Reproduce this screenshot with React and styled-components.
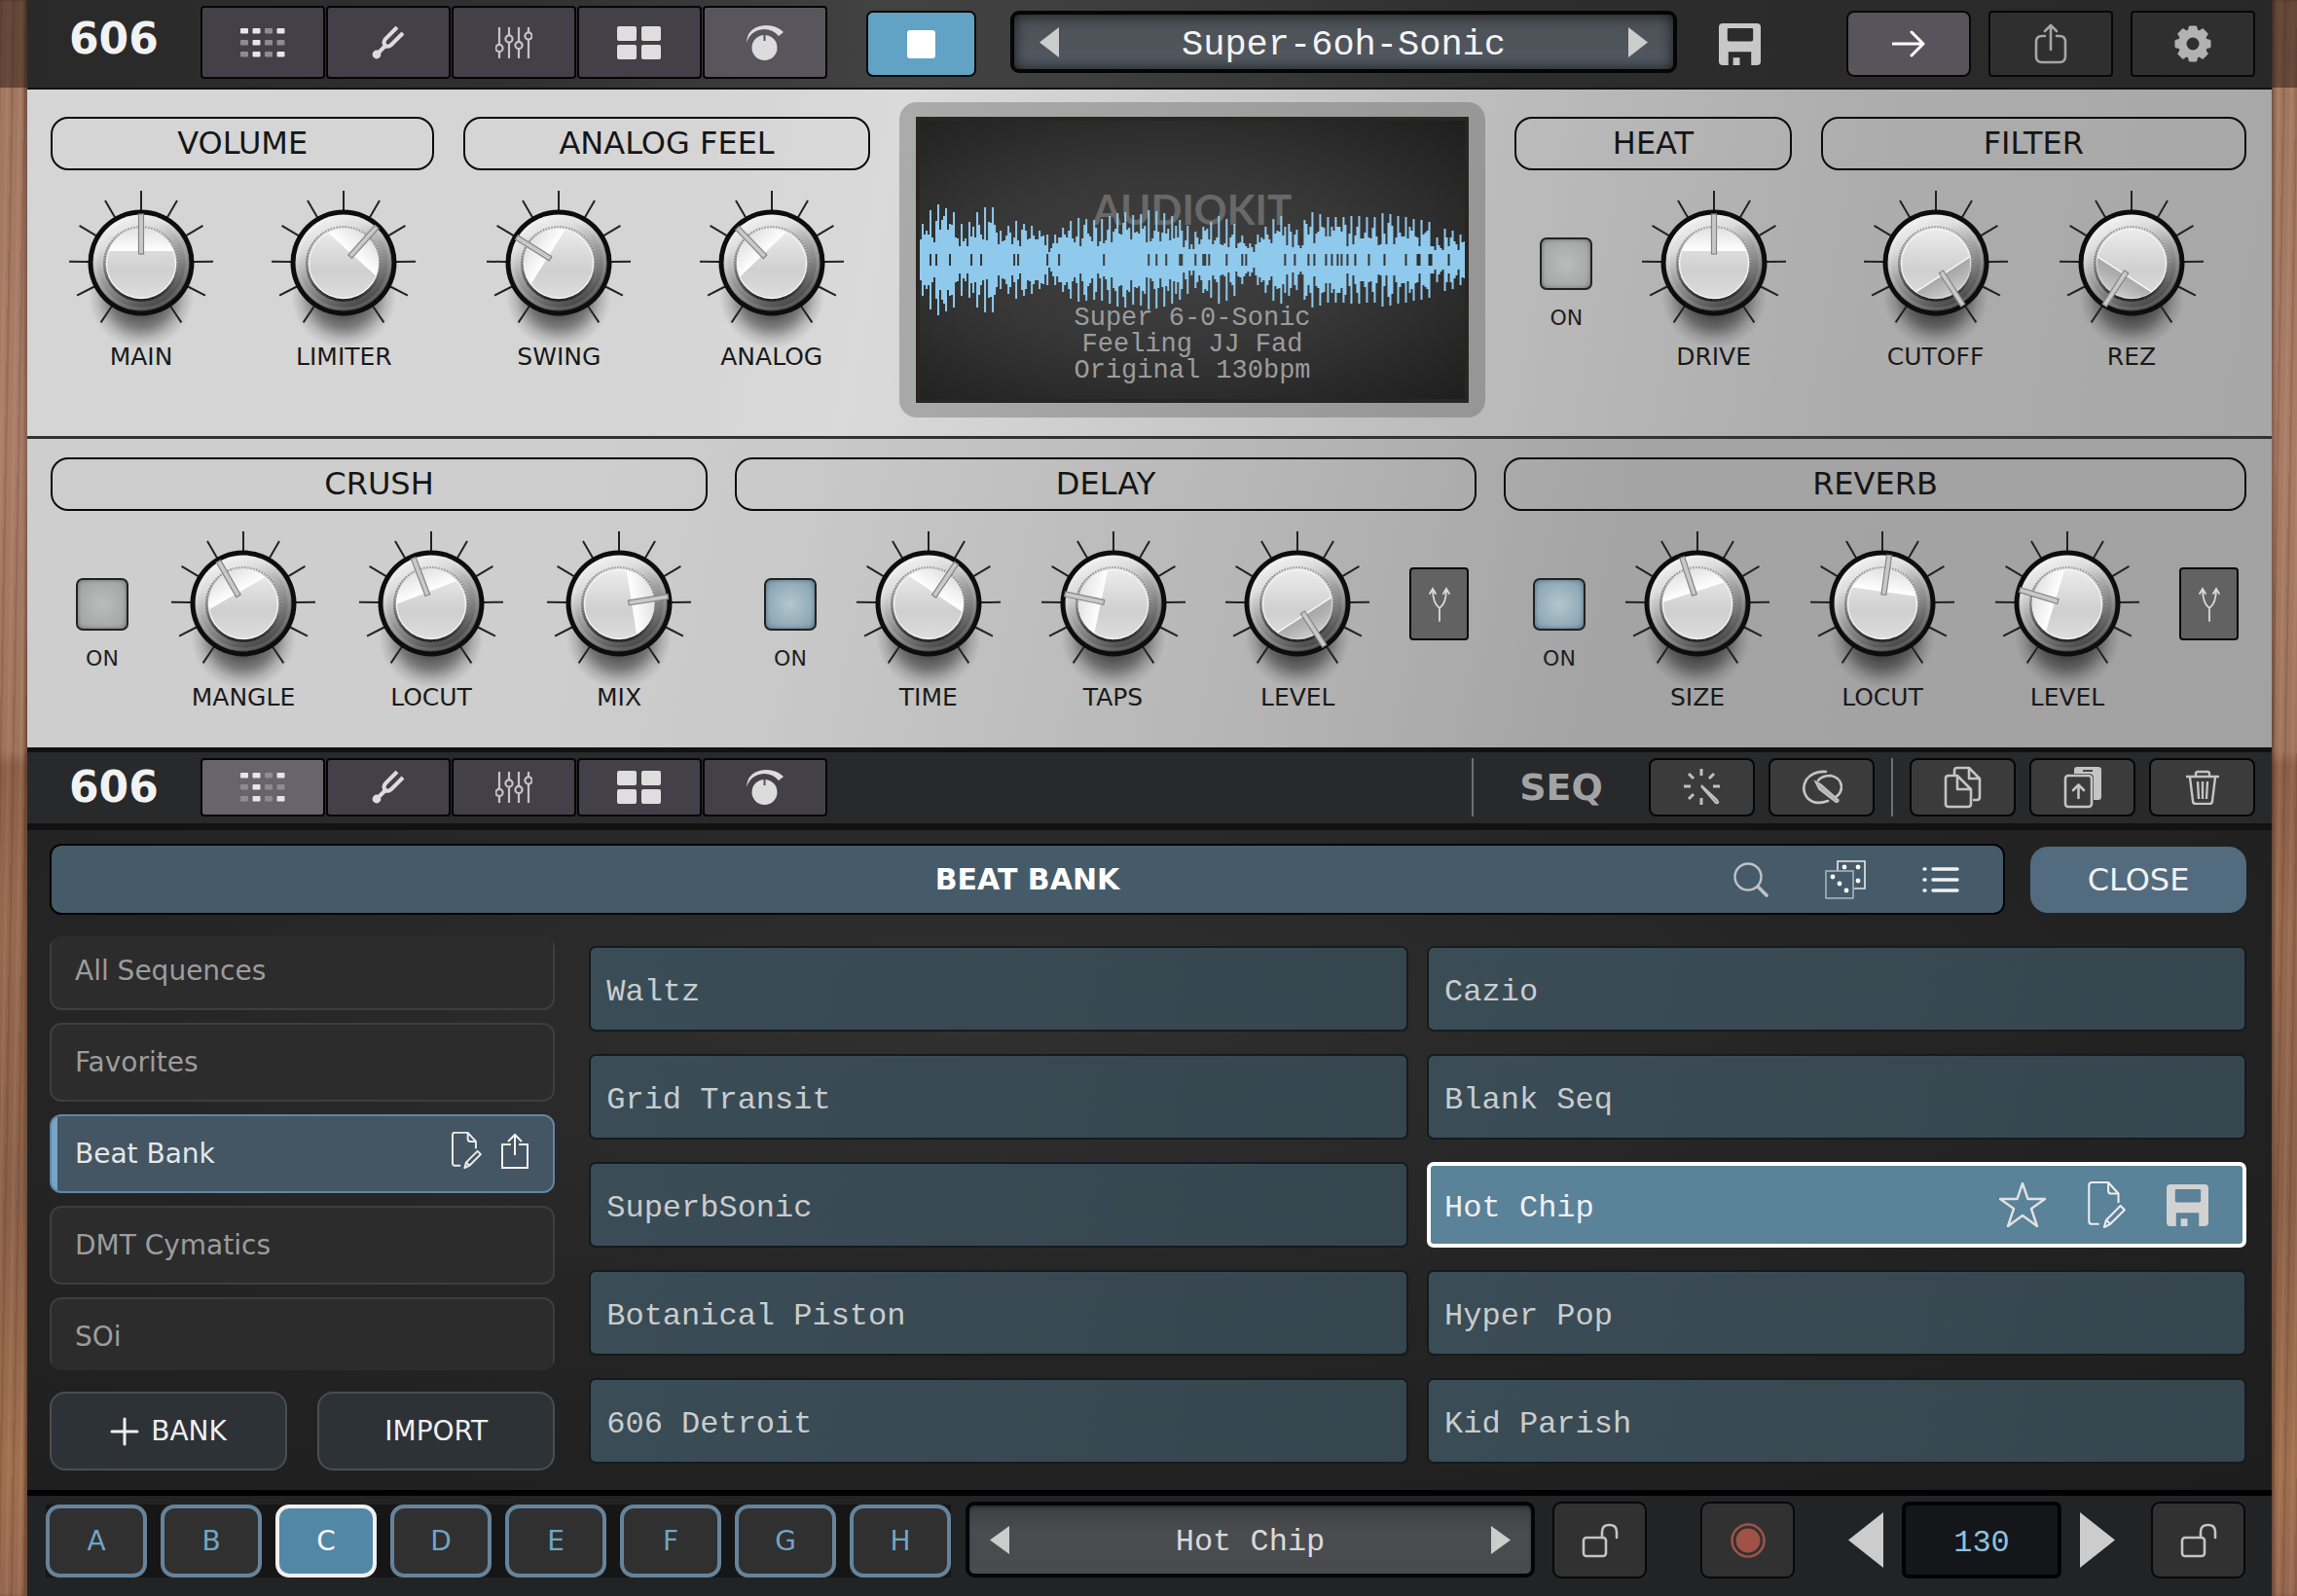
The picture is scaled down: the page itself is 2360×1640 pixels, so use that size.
import React from "react";
import styled, { createGlobalStyle, css } from "styled-components";

const GlobalStyle = createGlobalStyle`
    * {
        box-sizing: border-box;
    }

    body {
        margin: 0;
        background: #1b1b1b;
        font-family: "DejaVu Sans", sans-serif;
    }

    button {
        font-family: inherit;
        padding: 0;
        margin: 0;
        cursor: pointer;
    }

    svg {
        display: block;
    }
`

const lcd = css`
    font-family: "Liberation Mono", monospace;
`

const Device = styled.div`
    display: grid;
    grid-template-columns: 28px minmax(0, 1fr) 26px;
    min-height: 100vh;
`

const Wood = styled.div`
    background:
        linear-gradient(to bottom, rgba(40, 24, 16, 0.5) 90px, transparent 90px),
        repeating-linear-gradient(91deg, rgba(60, 25, 10, 0.14) 0 2px, transparent 3px 7px, rgba(255, 220, 190, 0.07) 8px 10px, transparent 11px 13px),
        linear-gradient(to bottom, #a0765e, #a97c66 28%, #a0745c 47%, #8c5f47 48%, #96694f 58%, #8a6049 75%, #a0704f 92%, #966750);
    box-shadow: inset ${({ $side }) => ($side === "left" ? "-3px" : "3px")} 0 3px rgba(0, 0, 0, 0.25);
`

const Main = styled.main`
    display: flex;
    flex-direction: column;
    min-width: 0;
`

/* ---------- toolbars ---------- */

const TopBar = styled.header`
    display: flex;
    align-items: flex-start;
    height: 92px;
    padding: 0 17px 0 43px;
    border-bottom: 2px solid #111;
    background: linear-gradient(to right, #292929, #303030 22%, #424242 38%, #3e3e3e 48%, #2d2d2d 66%, #282828);
`

const SeqBar = styled.header`
    display: flex;
    align-items: center;
    height: 85px;
    padding: 0 17px 2px 43px;
    border-top: 5px solid #111;
    border-bottom: 7px solid #121212;
    background: #27292b;
`

const Logo = styled.div`
    width: 135px;
    color: #f2f2f2;
    font-size: 44px;
    line-height: 80px;
    font-weight: bold;
`

const SeqTitle = styled.h2`
    margin: 0 20px;
    width: 140px;
    text-align: center;
    color: #a3a3a5;
    font-size: 38px;
    font-weight: bold;
    line-height: 60px;
`

const Tabs = styled.nav`
    display: flex;
    gap: 1px;
    padding-top: ${({ $top }) => $top}px;
`

const Tab = styled.button`
    display: flex;
    align-items: center;
    justify-content: center;
    width: 128px;
    height: ${({ $tall }) => ($tall ? 75 : 60)}px;
    border: 2px solid #050505;
    border-radius: 4px;
    background: ${({ $active, $tall }) => ($active ? ($tall ? "#58565c" : "#67656b") : "#434147")};
`

const Spacer = styled.div`
    flex: 1;
`

const StopButton = styled.button`
    display: flex;
    align-items: center;
    justify-content: center;
    width: 113px;
    height: 68px;
    margin: 11px 35px 0 40px;
    border: 2px solid #0a0a0a;
    border-radius: 7px;
    background: #62a2c4;
`

const Display = styled.div`
    display: flex;
    align-items: center;
    justify-content: space-between;
    flex: 1;
    min-width: 0;
    height: 78px;
    padding: 0 21px;
    border: 4px solid #050505;
    border-radius: 9px;
    background: linear-gradient(#3e3f41, #4a4c50 40%, #484a4e);
    box-shadow: inset 0 2px 3px rgba(0, 0, 0, 0.35);
`

const PresetDisplay = styled(Display)`
    height: 64px;
    margin-top: 11px;
    padding: 0 26px;
    background: linear-gradient(#4b5056, #535961);
    box-shadow: inset 0 0 14px rgba(0, 0, 0, 0.75);
`

const DisplayText = styled.span`
    ${lcd}
    padding-top: 5px;
    color: ${({ $dim }) => ($dim ? "#d9d9d9" : "#f4f4f4")};
    font-size: ${({ $dim }) => ($dim ? 32 : 37)}px;
    white-space: nowrap;
`

const PlainButton = styled.button`
    display: flex;
    align-items: center;
    justify-content: center;
    border: 0;
    background: none;
`

const SaveButton = styled(PlainButton)`
    width: 44px;
    height: 46px;
    margin: 22px 88px 0 42px;
`

const ToolGroup = styled.div`
    display: flex;
    gap: ${({ $gap }) => $gap}px;
`

const BarButton = styled.button`
    display: flex;
    align-items: center;
    justify-content: center;
    width: 128px;
    height: 68px;
    margin-top: 11px;
    border: 2px solid #080808;
    border-radius: ${({ $lit }) => ($lit ? 8 : 4)}px;
    background: ${({ $lit }) => ($lit ? "#57555b" : "#2f2f2f")};
`

const SeqButton = styled.button`
    display: flex;
    align-items: center;
    justify-content: center;
    width: 109px;
    height: 60px;
    border: 2px solid #050505;
    border-radius: 8px;
    background: #3b3b3b;
`

const Divider = styled.div`
    width: 2px;
    height: 60px;
    background: #6f7072;
    margin: 0 ${({ $gap }) => $gap}px;
`

/* ---------- synth panels ---------- */

const Panel = styled.section`
    display: grid;
    align-items: start;
`

const UpperPanel = styled(Panel)`
    grid-template-columns: 394fr 417fr 602fr 284fr 437fr;
    column-gap: 30px;
    padding: 13px 26px 19px 24px;
    border-bottom: 3px solid #333;
    background: linear-gradient(100deg, #d5d5d5 30%, #dadada 38%, #bcbcbc 64%, #adadad 80%, #a7a7a7);
`

const LowerPanel = styled(Panel)`
    grid-template-columns: 675fr 762fr 763fr;
    column-gap: 28px;
    padding: 19px 26px 37px 24px;
    background: linear-gradient(102deg, #cecece 24%, #c9c9c9 34%, #b6b6b6 54%, #a4a4a4 70%, #a2a2a2);
`

const GroupBox = styled.div`
    margin-top: ${({ $top }) => $top || 0}px;
    min-width: 0;
`

const GroupTitle = styled.h3`
    margin: 0 0 20px;
    border: 2px solid #0c0c0c;
    border-radius: 18px;
    text-align: center;
    font-size: 32px;
    font-weight: normal;
    line-height: 51px;
    color: #151515;
`

const GroupRow = styled.div`
    display: flex;
    justify-content: space-between;
    padding: 0 ${({ $right }) => $right}px 0 ${({ $left }) => $left}px;
`

const KnobBox = styled.div`
    display: flex;
    flex-direction: column;
    align-items: center;
    width: 150px;
    svg {
        overflow: visible;
    }
`

const KnobLabel = styled.span`
    position: relative;
    margin-top: 8px;
    font-size: 25px;
    line-height: 28px;
    color: #1a1a1a;
`

const SwitchBox = styled.div`
    display: flex;
    flex-direction: column;
    align-items: center;
    width: 54px;
    padding-top: 49px;
`

const SwitchButton = styled.button`
    width: 54px;
    height: 54px;
    border: 2px solid #222;
    border-radius: 7px;
    background: ${({ $on }) => ($on ? "radial-gradient(#b5c6cb, #8faab8 70%, #7795a6)" : "radial-gradient(#b9bdbb, #a4a8a6 75%, #959997)")};
    box-shadow: inset 0 0 4px rgba(0, 0, 0, 0.35);
`

const SwitchLabel = styled.span`
    margin-top: 17px;
    font-size: 22px;
    line-height: 24px;
    color: #1f1f1f;
`

const RouteButton = styled.button`
    display: flex;
    align-items: center;
    justify-content: center;
    width: 61px;
    height: 75px;
    margin-top: 38px;
    border: 2px solid #0a0a0a;
    border-radius: 4px;
    background: #626262;
`

const Bezel = styled.div`
    padding: 15px 17px;
    border-radius: 18px;
    background: rgba(70, 70, 70, 0.32);
`

const Screen = styled.div`
    display: grid;
    height: 294px;
    border: 4px solid #2a2523;
    background: radial-gradient(ellipse at 45% 50%, #414141, #373737 45%, #1e1e1e 100%);
    > * {
        grid-area: 1 / 1;
    }
`

const ScreenText = styled.div`
    display: flex;
    flex-direction: column;
    align-items: center;
    padding-top: 68px;
`

const Brand = styled.div`
    color: #686868;
    font-family: Lato, sans-serif;
    font-size: 42px;
    font-weight: bold;
    line-height: 46px;
`

const Notes = styled.p`
    ${lcd}
    margin: 76px 0 0;
    text-align: center;
    white-space: pre-line;
    color: #9c9c9c;
    font-size: 27px;
    line-height: 27px;
`

const WaveSvg = styled.svg`
    width: 100%;
    height: 286px;
`

/* ---------- browser ---------- */

const Browser = styled.section`
    padding: 14px 26px 20px 23px;
    border-bottom: 6px solid #000;
    background: radial-gradient(ellipse at 42% 30%, #303030, #242424 50%, #1d1d1d);
`

const BrowserHead = styled.div`
    display: flex;
    align-items: center;
    gap: 26px;
`

const HeadBar = styled.div`
    display: grid;
    grid-template-columns: 1fr auto 1fr;
    align-items: center;
    flex: 1;
    height: 73px;
    padding: 0 45px;
    border: 2px solid #030303;
    border-radius: 12px;
    background: #465b69;
`

const HeadTitle = styled.h2`
    grid-column: 2;
    margin: 0;
    color: #fff;
    font-size: 30px;
    line-height: 40px;
`

const HeadTools = styled.div`
    display: flex;
    align-items: center;
    justify-content: flex-end;
    gap: 58px;
`

const CloseButton = styled.button`
    width: 222px;
    height: 68px;
    border: 0;
    border-radius: 18px;
    background: #536b7e;
    color: #f1f1f1;
    font-size: 32px;
`

const BrowserBody = styled.div`
    display: grid;
    grid-template-columns: 519fr 1702fr;
    column-gap: 35px;
    margin-top: 22px;
`

const BankList = styled.div`
    display: flex;
    flex-direction: column;
    justify-content: center;
    gap: 13px;
    height: 446px;
    overflow: hidden;
    border-radius: 12px;
`

const Bank = styled.div`
    display: flex;
    align-items: center;
    flex: none;
    height: 81px;
    border: 2px solid ${({ $active }) => ($active ? "#5f87a4" : "#3e3e3e")};
    border-radius: 12px;
    background: ${({ $active }) => ($active ? "linear-gradient(to right, #76a5c6 6px, #445563 6px)" : "#2c2c2c")};
`

const BankName = styled.button`
    flex: 1;
    height: 77px;
    padding-left: 24px;
    border: 0;
    background: none;
    text-align: left;
    font-size: 28px;
    color: ${({ $active }) => ($active ? "#e6e6e6" : "#9c9c9e")};
`

const BankTools = styled.div`
    display: flex;
    gap: 20px;
    padding: 0 25px 6px 0;
`

const BankActions = styled.div`
    display: grid;
    grid-template-columns: 1fr 1fr;
    gap: 31px;
    margin-top: 22px;
`

const ActionButton = styled.button`
    display: flex;
    align-items: center;
    justify-content: center;
    gap: 12px;
    height: 81px;
    border: 2px solid #4a4e51;
    border-radius: 16px;
    background: #2d3237;
    color: #efefef;
    font-size: 28px;
`

const Sequences = styled.div`
    display: grid;
    grid-template-columns: 1fr 1fr;
    align-content: start;
    gap: 23px 19px;
    padding-top: 10px;
`

const Sequence = styled.div`
    display: flex;
    align-items: center;
    height: 88px;
    border: 2px solid #151a1d;
    border-radius: 7px;
    background: linear-gradient(100deg, #3a4c56, #36464f);
    ${({ $active }) => $active && css`
        border: 4px solid #fff;
        background: #5a8299;
    `}
`

const SequenceName = styled.button`
    ${lcd}
    flex: 1;
    height: 80px;
    padding: 6px 0 0 ${({ $active }) => ($active ? 14 : 16)}px;
    border: 0;
    background: none;
    text-align: left;
    font-size: 32px;
    color: ${({ $active }) => ($active ? "#f0f0f0" : "#c9cccd")};
`

const SequenceTools = styled.div`
    display: flex;
    align-items: center;
    gap: 42px;
    padding-right: 35px;
`

/* ---------- footer ---------- */

const Footer = styled.footer`
    display: flex;
    align-items: flex-start;
    flex: 1;
    min-height: 103px;
    padding: 6px 27px 0 19px;
    background: #212325;
`

const Pads = styled.div`
    display: flex;
    gap: 14px;
    margin: 3px 15px 0 0;
    background: #161616;
`

const Pad = styled.button`
    width: 104px;
    height: 75px;
    border: 4px solid ${({ $active }) => ($active ? "#f0f0f0" : "#66839b")};
    border-radius: 14px;
    background: ${({ $active }) => ($active ? "#5288a5" : "#303030")};
    color: ${({ $active }) => ($active ? "#f4f4f4" : "#6fa5c6")};
    font-size: 28px;
`

const SquareButton = styled.button`
    display: flex;
    align-items: center;
    justify-content: center;
    width: 97px;
    height: 79px;
    margin-left: ${({ $gap }) => $gap}px;
    border: 2px solid #080808;
    border-radius: 9px;
    background: #313131;
`

const Tempo = styled.div`
    display: flex;
    align-items: center;
    gap: 19px;
    margin-left: 55px;
`

const TempoInput = styled.input`
    ${lcd}
    width: 164px;
    height: 79px;
    padding: 5px 0 0;
    border: 4px solid #030303;
    border-radius: 7px;
    background: #15161a;
    color: #8ec2de;
    text-align: center;
    font-size: 32px;
`

/* ---------- icons ---------- */

const GRID = ["1101", "0100", "0101"]

const GridIcon = () => (
    <svg width="46" height="30" viewBox="0 0 46 30">
        {GRID.map((row, y) =>
            row.split("").map((on, x) => (
                <rect key={`${x}${y}`} x={x * 12.5} y={y * 12} width="8" height="5.5" rx="1" fill={on === "1" ? "#e6e6e6" : "#8d8c90"} />
            ))
        )}
    </svg>
)

const ForkIcon = () => (
    <svg width="34" height="34" viewBox="0 0 34 34" fill="none" stroke="#dcdcdc">
        <path d="M26 1 L14 13 Q11 17 14 20 Q17 22 20 19 L32 7" strokeWidth="4" />
        <path d="M14 20 L5 29" strokeWidth="4" strokeLinecap="round" />
        <circle cx="5" cy="29" r="4.4" fill="#dcdcdc" stroke="none" />
    </svg>
)

const FadersIcon = () => (
    <svg width="38" height="34" viewBox="0 0 38 34" fill="none" stroke="#c4c4c6" strokeWidth="2.2">
        <path d="M4 1V19M4 26V33M14 1V9M14 17V33M24 1V16M24 23V33M34 1V6M34 14V33" />
        <circle cx="4" cy="22.5" r="3.6" />
        <circle cx="14" cy="13" r="3.6" />
        <circle cx="24" cy="19.5" r="3.6" />
        <circle cx="34" cy="10" r="3.6" />
    </svg>
)

const PadsIcon = () => (
    <svg width="46" height="34" viewBox="0 0 46 34" fill="#dedede">
        <rect x="0" y="0" width="20" height="15" rx="2" />
        <rect x="25" y="0" width="20" height="15" rx="2" />
        <rect x="0" y="19" width="20" height="15" rx="2" />
        <rect x="25" y="19" width="20" height="15" rx="2" />
    </svg>
)

const DialIcon = () => (
    <svg width="38" height="38" viewBox="0 0 38 38">
        <path d="M0 19 Q1 2 20 1 Q31 1 38 8 L33 12 Q27 5 18 5 Q4 6 0 19Z" fill="#dcdcdc" />
        <circle cx="18.5" cy="24" r="13" fill="#dcdcdc" />
        <path d="M18.500 11V17" stroke="#555" strokeWidth="2" />
    </svg>
)

const TabIcons = [GridIcon, ForkIcon, FadersIcon, PadsIcon, DialIcon]
const tabNames = ["Sequencer", "Tune", "Mixer", "Pads", "Effects"]

const Triangle = ({ w = 20, h = 31, flip }) => (
    <svg width={w} height={h} viewBox="0 0 20 30" preserveAspectRatio="none" fill="#cccccc">
        <path d={flip ? "M0 0L20 15L0 30Z" : "M20 0L0 15L20 30Z"} />
    </svg>
)

const SaveIcon = ({ color = "#c8c8c8" }) => (
    <svg width="43" height="43" viewBox="0 0 44 44" fill={color}>
        <path fillRule="evenodd" d="M4 0H40Q44 0 44 4V40Q44 44 40 44H34V30H10V44H4Q0 44 0 40V4Q0 0 4 0ZM9 6V17Q9 19 11 19H34Q36 19 36 17V6Q36 5 34 5H11Q9 5 9 6Z" />
        <rect x="15" y="36" width="7" height="8" />
    </svg>
)

const ArrowIcon = () => (
    <svg width="34" height="28" viewBox="0 0 34 28" fill="none" stroke="#fff" strokeWidth="3" strokeLinecap="round" strokeLinejoin="round">
        <path d="M1 14H32M20 2L32 14L20 26" />
    </svg>
)

const RoundShareIcon = () => (
    <svg width="34" height="42" viewBox="0 0 34 42" fill="none" stroke="#a6a6a6" strokeWidth="2.6" strokeLinecap="round" strokeLinejoin="round">
        <path d="M11 13H8Q2 13 2 19V34Q2 40 8 40H26Q32 40 32 34V19Q32 13 26 13H23M17 27V2M11 8L17 2L23 8" />
    </svg>
)

const GearIcon = () => (
    <svg width="40" height="40" viewBox="-20 -20 40 40" fill="#b2b2b2">
        {[0, 45, 90, 135, 180, 225, 270, 315].map((a) => (
            <path key={a} d="M-5 -12L-3.6 -18H3.6L5 -12Z" transform={`rotate(${a})`} stroke="#b2b2b2" strokeLinejoin="round" />
        ))}
        <path fillRule="evenodd" d="M0 -15A15 15 0 1 0 0 15A15 15 0 1 0 0 -15ZM0 -6.5A6.5 6.5 0 1 1 0 6.5A6.5 6.5 0 1 1 0 -6.5Z" />
    </svg>
)

const SparkIcon = () => (
    <svg width="40" height="40" viewBox="0 0 40 40" fill="none" stroke="#c0c0c0" strokeWidth="3">
        <path d="M19 1V8M19 31V38M1 19H8M31 19H38M6 6L11 11M32 6L27 11M6 32L11 27" />
        <path d="M19 18L35 33Q38 37 34 36L19 19" strokeWidth="2" fill="#777" />
    </svg>
)

const BrushIcon = () => (
    <svg width="42" height="36" viewBox="0 0 42 36" fill="none" stroke="#c4c4c4" strokeWidth="2.6" strokeLinecap="round">
        <path d="M25 2Q12 1 5 10Q-1 20 6 29Q14 37 27 32" />
        <path d="M17 11Q21 6 30 6Q40 8 41 17Q41 24 35 28" />
        <path d="M14 12L20 15L38 31Q38 34 35 33L18 20Z" fill="#b4b4b4" strokeWidth="1.4" />
    </svg>
)

const CopyIcon = () => (
    <svg width="40" height="44" viewBox="0 0 40 44" fill="none" stroke="#c4c4c4" strokeWidth="2.6" strokeLinejoin="round">
        <path d="M11 9V5Q11 2 14 2H26L37 13V32Q37 35 34 35H30M26 2V13H37" />
        <path d="M5 10H14L28 24V39Q28 42 25 42H5Q2 42 2 39V13Q2 10 5 10ZM14 10V24H28" />
    </svg>
)

const PasteIcon = () => (
    <svg width="40" height="44" viewBox="0 0 40 44">
        <path d="M11 8V4Q11 1 14 1H36Q39 1 39 4V32Q39 35 36 35H31V13Q31 8 26 8Z" fill="#c4c4c4" />
        <path d="M20 5H30" stroke="#444" strokeWidth="2" />
        <g fill="none" stroke="#c4c4c4" strokeWidth="2.6" strokeLinecap="round" strokeLinejoin="round">
            <rect x="2" y="10" width="27" height="32" rx="3" />
            <path d="M15.500 33V20M10 25L15.500 19.500L21 25" />
        </g>
    </svg>
)

const TrashIcon = () => (
    <svg width="34" height="36" viewBox="0 0 34 36" fill="none" stroke="#c4c4c4" strokeWidth="2.4" strokeLinejoin="round">
        <path d="M0 7H34M10 7V4Q10 2 12 2H22Q24 2 24 4V7M4 8L7 32Q7 35 10 35H24Q27 35 27 32L30 8M12 12L13 30M17 12V30M22 12L21 30" />
    </svg>
)

const RouteIcon = () => (
    <svg width="22" height="36" viewBox="0 0 22 36" fill="none" stroke="#dadada" strokeWidth="1.8" strokeLinecap="round">
        <path d="M11 35V22Q4 17 4 2M11 22Q18 17 18 2M1 7L4 2L7 7M15 7L18 2L21 7" />
    </svg>
)

const SearchIcon = () => (
    <svg width="36" height="36" viewBox="0 0 36 36" fill="none" stroke="#c2c2c2" strokeLinecap="round">
        <circle cx="15" cy="15" r="13.5" strokeWidth="2.4" />
        <path d="M25 25L34 34" strokeWidth="3.6" />
    </svg>
)

const DiceIcon = () => (
    <svg width="42" height="40" viewBox="0 0 42 40" fill="none" stroke="#e6eaec" strokeWidth="1.6">
        <path d="M13 11V1H41V29H30" />
        <rect x="1" y="11" width="28" height="28" stroke="#a5b4be" />
        <g fill="#fff" stroke="none">
            <circle cx="20" cy="7" r="2.4" />
            <circle cx="34" cy="7" r="2.4" />
            <circle cx="34" cy="21" r="2.4" />
            <circle cx="8" cy="17" r="2.4" />
            <circle cx="15" cy="24" r="2.4" />
            <circle cx="22" cy="31" r="2.4" />
        </g>
    </svg>
)

const ListIcon = () => (
    <svg width="38" height="28" viewBox="0 0 38 28" stroke="#f2f2f2" strokeWidth="3.4" strokeLinecap="round">
        <path d="M2 3H3M11 3H36M2 14H3M11 14H36M2 25H3M11 25H36" />
    </svg>
)

const NoteIcon = ({ w, h, width }) => (
    <svg width={w} height={h} viewBox="0 0 38 46" fill="none" stroke="#ececec" strokeWidth={width} strokeLinejoin="round">
        <path d="M12 42H5Q2 42 2 39V4Q2 1 5 1H21L31 12V21M21 1V9Q21 12 24 12H31" />
        <path d="M17 45L19 38L33 24L37 28L23 42ZM19 38L23 42" />
    </svg>
)

const ShareIcon = () => (
    <svg width="28" height="37" viewBox="0 0 28 37" fill="none" stroke="#f2f2f2" strokeWidth="2">
        <path d="M10 12H1V36H27V12H18M14 23V2M7 9L14 2L21 9" />
    </svg>
)

const StarIcon = () => (
    <svg width="48" height="46" viewBox="0 0 48 46" fill="none" stroke="#e2e2e2" strokeWidth="2.4" strokeLinejoin="round">
        <path d="M24 1L29.500 17H47L33 27L39 45L24 34L9 45L15 27L1 17H18.500Z" />
    </svg>
)

const PlusIcon = () => (
    <svg width="30" height="30" viewBox="0 0 30 30" stroke="#efefef" strokeWidth="3" strokeLinecap="round">
        <path d="M15 2V28M2 15H28" />
    </svg>
)

const LockIcon = () => (
    <svg width="38" height="36" viewBox="0 0 38 36" fill="none" stroke="#c4c4c4" strokeWidth="2.6" strokeLinecap="round">
        <rect x="2" y="15" width="23" height="19" rx="3" />
        <path d="M21 15V9Q21 2 28.500 2Q36 2 36 9V15" />
    </svg>
)

const RecordIcon = () => (
    <svg width="38" height="38" viewBox="0 0 38 38">
        <circle cx="19" cy="19" r="16.5" fill="none" stroke="#9f5245" strokeWidth="2.6" />
        <circle cx="19" cy="19" r="12.5" fill="#9f5245" />
    </svg>
)

/* ---------- knob ---------- */

const ticks = [-146, -117, -89, -59, -30, 0, 30, 59, 89, 117, 146]

const Knob = ({ label, angle }) => (
    <KnobBox>
        <svg width="150" height="150" viewBox="-75 -75 150 150" role="img" aria-label={`${label} knob`}>
            <ellipse cx="0" cy="34" rx="54" ry="54" fill="url(#knobShadow)" />
            {ticks.map((t) => (
                <path key={t} d="M0 -54V-74" transform={`rotate(${t})`} stroke="#222" strokeWidth="2" />
            ))}
            <circle r="54.500" fill="#0d0d0d" />
            <circle r="49.500" fill="url(#knobRim)" />
            <circle r="47" fill="none" stroke="#fff" strokeOpacity="0.12" strokeWidth="3" />
            <circle cy="1" r="39" fill="url(#knobTeeth)" />
            <circle cy="1" r="38" fill="none" stroke="#555" strokeOpacity="0.5" strokeWidth="2" strokeDasharray="1.5 1.5" />
            <circle cy="1" r="35.500" fill="url(#knobCap)" stroke="#f4f4f4" strokeWidth="1.4" />
            <g transform={`rotate(${angle} 0 1)`}>
                {Math.abs(angle) > 120 ? (
                    <>
                        <path d="M-33 -12A35 35 0 0 1 33 -12Z" fill="url(#knobShade)" />
                        <path d="M-33 -12H33" stroke="#f6f6f6" strokeWidth="1.6" />
                    </>
                ) : (
                    <path d="M-33 -12A35 35 0 0 1 33 -12Z" fill="url(#knobGlare)" />
                )}
                <rect x="-2.5" y="-50" width="5" height="41" fill="#c9c9c9" stroke="#858585" strokeWidth="1.2" />
            </g>
        </svg>
        <KnobLabel>{label}</KnobLabel>
    </KnobBox>
)

const Defs = styled.svg`
    position: absolute;
`

const KnobPaints = () => (
    <Defs width="0" height="0" aria-hidden="true">
        <defs>
            <linearGradient id="knobRim" x1="0.25" y1="0" x2="0.7" y2="1">
                <stop offset="0" stopColor="#f6f6f6" />
                <stop offset="0.25" stopColor="#dcdcdc" />
                <stop offset="0.5" stopColor="#a2a2a2" />
                <stop offset="0.78" stopColor="#6b6b6b" />
                <stop offset="1" stopColor="#3a3a3a" />
            </linearGradient>
            <linearGradient id="knobTeeth" x1="0" y1="0" x2="0" y2="1">
                <stop offset="0" stopColor="#e2e2e2" />
                <stop offset="0.5" stopColor="#9a9a9a" />
                <stop offset="1" stopColor="#151515" />
            </linearGradient>
            <linearGradient id="knobCap" x1="0" y1="0" x2="0" y2="1">
                <stop offset="0" stopColor="#ececec" />
                <stop offset="0.6" stopColor="#cfcfcf" />
                <stop offset="1" stopColor="#dedede" />
            </linearGradient>
            <linearGradient id="knobGlare" x1="0" y1="0" x2="0" y2="1">
                <stop offset="0" stopColor="#e2e2e2" />
                <stop offset="1" stopColor="#ffffff" />
            </linearGradient>
            <linearGradient id="knobShade" x1="0" y1="0" x2="0" y2="1">
                <stop offset="0" stopColor="#8a8a8a" stopOpacity="0.2" />
                <stop offset="1" stopColor="#8a8a8a" stopOpacity="0.6" />
            </linearGradient>
            <radialGradient id="knobShadow">
                <stop offset="0.3" stopColor="#000" stopOpacity="0.65" />
                <stop offset="0.6" stopColor="#000" stopOpacity="0.42" />
                <stop offset="0.82" stopColor="#000" stopOpacity="0.14" />
                <stop offset="1" stopColor="#000" stopOpacity="0" />
            </radialGradient>
        </defs>
    </Defs>
)

const Switch = ({ on }) => (
    <SwitchBox>
        <SwitchButton $on={on} aria-label="On" aria-pressed={!!on} />
        <SwitchLabel>ON</SwitchLabel>
    </SwitchBox>
)

const Group = ({ title, top, left, right, children }) => (
    <GroupBox $top={top}>
        <GroupTitle>{title}</GroupTitle>
        <GroupRow $left={left} $right={right}>{children}</GroupRow>
    </GroupBox>
)

/* ---------- wave form ---------- */

// loudest peak around each x position
const envelope = [
    [0, 24], [6, 44], [20, 53], [37, 44], [46, 30], [58, 45], [74, 54], [81, 27], [99, 37], [115, 32],
    [136, 22], [144, 28], [158, 40], [184, 38], [207, 46], [222, 42], [238, 48], [253, 44], [271, 36], [282, 26],
    [308, 42], [322, 36], [337, 14], [351, 28], [368, 44], [386, 28], [402, 46], [423, 40], [446, 42], [466, 40],
    [476, 45], [489, 42], [515, 38], [521, 41], [530, 20], [538, 30], [549, 27], [560, 22],
]

const peakAt = (x) => {
    const i = envelope.findIndex((p) => p[0] >= x)
    if (i <= 0) return envelope[0][1]
    const [x0, a0] = envelope[i - 1]
    const [x1, a1] = envelope[i]
    return a0 + ((a1 - a0) * (x - x0)) / (x1 - x0)
}

const noise = (n) => {
    const v = Math.sin(n * 127.1) * 43758.5453
    return v - Math.floor(v)
}

const MID = 143

const wave = Array.from({ length: 280 }, (_, i) => {
    const x = i * 2 + 1
    const spike = i % 4 === 1 ? 1.08 : 0.34 + 0.6 * noise(i + 3)
    const h = Math.round(peakAt(x) * spike)
    if (noise(i + 900) > 0.88) {
        return `M${x} ${MID - h}V${MID - 6}M${x} ${MID + 6}V${MID + h}`
    }
    return `M${x} ${MID - h}V${MID + h}`
}).join("")

const Waveform = () => (
    <WaveSvg viewBox="0 0 560 286" preserveAspectRatio="none" role="img" aria-label="Output wave form">
        <path d={wave} stroke="#8fcaec" strokeWidth="2" fill="none" />
    </WaveSvg>
)

/* ---------- data ---------- */

const banks = ["All Sequences", "Favorites", "Beat Bank", "DMT Cymatics", "SOi"]

const sequences = [
    "Waltz", "Cazio",
    "Grid Transit", "Blank Seq",
    "SuperbSonic", "Hot Chip",
    "Botanical Piston", "Hyper Pop",
    "606 Detroit", "Kid Parish",
]

const patterns = ["A", "B", "C", "D", "E", "F", "G", "H"]

const ViewTabs = ({ active, tall, top }) => (
    <Tabs $top={top}>
        {TabIcons.map((Icon, i) => (
            <Tab key={tabNames[i]} $active={i === active} $tall={tall} aria-label={tabNames[i]}>
                <Icon />
            </Tab>
        ))}
    </Tabs>
)

const App = () => {
    return (
        <>
            <GlobalStyle />
            <KnobPaints />
            <Device>
                <Wood $side="left" />
                <Main>
                    <TopBar>
                        <Logo>606</Logo>
                        <ViewTabs active={4} tall top={6} />
                        <StopButton aria-label="Stop">
                            <svg width="29" height="29"><rect width="29" height="29" rx="3" fill="#fff" /></svg>
                        </StopButton>
                        <PresetDisplay>
                            <PlainButton aria-label="Previous preset"><Triangle /></PlainButton>
                            <DisplayText>Super-6oh-Sonic</DisplayText>
                            <PlainButton aria-label="Next preset"><Triangle flip /></PlainButton>
                        </PresetDisplay>
                        <SaveButton aria-label="Save preset"><SaveIcon /></SaveButton>
                        <ToolGroup $gap={18}>
                            <BarButton $lit aria-label="Forward"><ArrowIcon /></BarButton>
                            <BarButton aria-label="Share"><RoundShareIcon /></BarButton>
                            <BarButton aria-label="Settings"><GearIcon /></BarButton>
                        </ToolGroup>
                    </TopBar>

                    <UpperPanel>
                        <Group title="VOLUME" top={15} left={18} right={18}>
                            <Knob label="MAIN" angle={0} />
                            <Knob label="LIMITER" angle={42} />
                        </Group>
                        <Group title="ANALOG FEEL" top={15} left={23} right={26}>
                            <Knob label="SWING" angle={-58} />
                            <Knob label="ANALOG" angle={-44} />
                        </Group>
                        <Bezel>
                            <Screen>
                                <ScreenText>
                                    <Brand>AUDIOKIT</Brand>
                                    <Notes>{"Super 6-0-Sonic\nFeeling JJ Fad\nOriginal 130bpm"}</Notes>
                                </ScreenText>
                                <Waveform />
                            </Screen>
                        </Bezel>
                        <Group title="HEAT" top={15} left={26} right={5}>
                            <Switch />
                            <Knob label="DRIVE" angle={0} />
                        </Group>
                        <Group title="FILTER" top={15} left={43} right={43}>
                            <Knob label="CUTOFF" angle={147} />
                            <Knob label="REZ" angle={-147} />
                        </Group>
                    </UpperPanel>

                    <LowerPanel>
                        <Group title="CRUSH" left={26} right={16}>
                            <Switch />
                            <Knob label="MANGLE" angle={-30} />
                            <Knob label="LOCUT" angle={-21} />
                            <Knob label="MIX" angle={81} />
                        </Group>
                        <Group title="DELAY" left={30} right={8}>
                            <Switch on />
                            <Knob label="TIME" angle={34} />
                            <Knob label="TAPS" angle={-78} />
                            <Knob label="LEVEL" angle={147} />
                            <RouteButton aria-label="Delay routing"><RouteIcon /></RouteButton>
                        </Group>
                        <Group title="REVERB" left={30} right={8}>
                            <Switch on />
                            <Knob label="SIZE" angle={-18} />
                            <Knob label="LOCUT" angle={8} />
                            <Knob label="LEVEL" angle={-73} />
                            <RouteButton aria-label="Reverb routing"><RouteIcon /></RouteButton>
                        </Group>
                    </LowerPanel>

                    <SeqBar>
                        <Logo>606</Logo>
                        <ViewTabs active={0} top={0} />
                        <Spacer />
                        <Divider $gap={0} />
                        <SeqTitle>SEQ</SeqTitle>
                        <ToolGroup $gap={14}>
                            <SeqButton aria-label="Generate"><SparkIcon /></SeqButton>
                            <SeqButton aria-label="Clear accents"><BrushIcon /></SeqButton>
                        </ToolGroup>
                        <Divider $gap={17} />
                        <ToolGroup $gap={14}>
                            <SeqButton aria-label="Copy"><CopyIcon /></SeqButton>
                            <SeqButton aria-label="Paste"><PasteIcon /></SeqButton>
                            <SeqButton aria-label="Delete"><TrashIcon /></SeqButton>
                        </ToolGroup>
                    </SeqBar>

                    <Browser>
                        <BrowserHead>
                            <HeadBar>
                                <HeadTitle>BEAT BANK</HeadTitle>
                                <HeadTools>
                                    <PlainButton aria-label="Search"><SearchIcon /></PlainButton>
                                    <PlainButton aria-label="Random"><DiceIcon /></PlainButton>
                                    <PlainButton aria-label="List view"><ListIcon /></PlainButton>
                                </HeadTools>
                            </HeadBar>
                            <CloseButton>CLOSE</CloseButton>
                        </BrowserHead>
                        <BrowserBody>
                            <div>
                                <BankList>
                                    {banks.map((name) => {
                                        const active = name === "Beat Bank"
                                        return (
                                            <Bank key={name} $active={active}>
                                                <BankName $active={active}>{name}</BankName>
                                                {active && (
                                                    <BankTools>
                                                        <PlainButton aria-label="Rename bank"><NoteIcon w={32} h={38} width={2.4} /></PlainButton>
                                                        <PlainButton aria-label="Share bank"><ShareIcon /></PlainButton>
                                                    </BankTools>
                                                )}
                                            </Bank>
                                        )
                                    })}
                                </BankList>
                                <BankActions>
                                    <ActionButton><PlusIcon />BANK</ActionButton>
                                    <ActionButton>IMPORT</ActionButton>
                                </BankActions>
                            </div>
                            <Sequences>
                                {sequences.map((name) => {
                                    const active = name === "Hot Chip"
                                    return (
                                        <Sequence key={name} $active={active}>
                                            <SequenceName $active={active}>{name}</SequenceName>
                                            {active && (
                                                <SequenceTools>
                                                    <PlainButton aria-label="Favorite"><StarIcon /></PlainButton>
                                                    <PlainButton aria-label="Rename"><NoteIcon w={40} h={48} width={2} /></PlainButton>
                                                    <PlainButton aria-label="Save"><SaveIcon color="#d2d2d2" /></PlainButton>
                                                </SequenceTools>
                                            )}
                                        </Sequence>
                                    )
                                })}
                            </Sequences>
                        </BrowserBody>
                    </Browser>

                    <Footer>
                        <Pads>
                            {patterns.map((p) => (
                                <Pad key={p} $active={p === "C"}>{p}</Pad>
                            ))}
                        </Pads>
                        <Display>
                            <PlainButton aria-label="Previous sequence"><Triangle h={29} /></PlainButton>
                            <DisplayText $dim>Hot Chip</DisplayText>
                            <PlainButton aria-label="Next sequence"><Triangle h={29} flip /></PlainButton>
                        </Display>
                        <SquareButton $gap={18} aria-label="Lock sequence"><LockIcon /></SquareButton>
                        <SquareButton $gap={55} aria-label="Record"><RecordIcon /></SquareButton>
                        <Tempo>
                            <PlainButton aria-label="Slower"><Triangle w={36} h={57} /></PlainButton>
                            <TempoInput aria-label="Tempo" defaultValue="130" />
                            <PlainButton aria-label="Faster"><Triangle w={36} h={57} flip /></PlainButton>
                        </Tempo>
                        <SquareButton $gap={37} aria-label="Lock tempo"><LockIcon /></SquareButton>
                    </Footer>
                </Main>
                <Wood $side="right" />
            </Device>
        </>
    );
};

export default App
